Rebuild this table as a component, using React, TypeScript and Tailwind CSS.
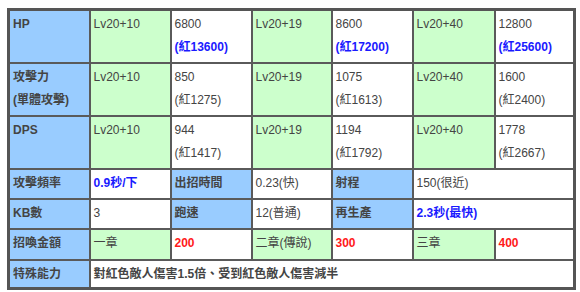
const B = "border-2 border-[#5a5a5a] align-top pt-[2px] pl-[3px] pr-[2px]";
const blue = `${B} bg-[#99ccff] font-bold`;
const green = `${B} bg-[#ccffcc]`;
const white = `${B} bg-white`;

const blueTxt = "text-[#1a1aff] font-bold";
const red = "text-[#ff1a1a] font-bold";

type Stat = { lv: string; base: string; red: string };

function StatRow({
  label,
  stats,
  hiBlue,
}: {
  label: React.ReactNode;
  stats: Stat[];
  hiBlue?: boolean;
}) {
  return (
    <tr className="h-[53px]">
      <td className={blue}>{label}</td>
      {stats.map((s) => (
        <>
          <td key={s.lv} className={green}>
            {s.lv}
          </td>
          <td key={s.lv + "v"} className={white}>
            <div>{s.base}</div>
            <div className={hiBlue ? blueTxt : ""}>(紅{s.red})</div>
          </td>
        </>
      ))}
    </tr>
  );
}

export default function App() {
  return (
    <div className="h-[292px] w-[580px] bg-white pt-[8px] pl-[7px]">
      <table
        className="table-fixed border-collapse border-[3px] border-[#555] text-[12px] leading-[23px] text-[#444]"
        style={{ fontFamily: '"Liberation Sans", Arial, "Noto Sans CJK TC", sans-serif' }}
      >
        <colgroup>
          <col className="w-[81px]" />
          <col className="w-[81px]" />
          <col className="w-[81px]" />
          <col className="w-[80px]" />
          <col className="w-[81px]" />
          <col className="w-[82px]" />
          <col className="w-[80px]" />
        </colgroup>
        <tbody>
          <StatRow
            label="HP"
            hiBlue
            stats={[
              { lv: "Lv20+10", base: "6800", red: "13600" },
              { lv: "Lv20+19", base: "8600", red: "17200" },
              { lv: "Lv20+40", base: "12800", red: "25600" },
            ]}
          />
          <StatRow
            label={
              <>
                <div>攻擊力</div>
                <div>(單體攻擊)</div>
              </>
            }
            stats={[
              { lv: "Lv20+10", base: "850", red: "1275" },
              { lv: "Lv20+19", base: "1075", red: "1613" },
              { lv: "Lv20+40", base: "1600", red: "2400" },
            ]}
          />
          <StatRow
            label="DPS"
            stats={[
              { lv: "Lv20+10", base: "944", red: "1417" },
              { lv: "Lv20+19", base: "1194", red: "1792" },
              { lv: "Lv20+40", base: "1778", red: "2667" },
            ]}
          />
          <tr className="h-[30px]">
            <td className={blue}>攻擊頻率</td>
            <td className={white}>
              <span className={blueTxt}>0.9秒/下</span>
            </td>
            <td className={blue}>出招時間</td>
            <td className={white}>0.23(快)</td>
            <td className={blue}>射程</td>
            <td className={white} colSpan={2}>
              150(很近)
            </td>
          </tr>
          <tr className="h-[30px]">
            <td className={blue}>KB數</td>
            <td className={white}>3</td>
            <td className={blue}>跑速</td>
            <td className={white}>12(普通)</td>
            <td className={blue}>再生產</td>
            <td className={white} colSpan={2}>
              <span className={blueTxt}>2.3秒(最快)</span>
            </td>
          </tr>
          <tr className="h-[31px]">
            <td className={blue}>招喚金額</td>
            <td className={green}>一章</td>
            <td className={white}>
              <span className={red}>200</span>
            </td>
            <td className={green}>二章(傳說)</td>
            <td className={white}>
              <span className={red}>300</span>
            </td>
            <td className={green}>三章</td>
            <td className={white}>
              <span className={red}>400</span>
            </td>
          </tr>
          <tr className="h-[29px]">
            <td className={blue}>特殊能力</td>
            <td className={`${white} font-bold`} colSpan={6}>
              對紅色敵人傷害1.5倍、受到紅色敵人傷害減半
            </td>
          </tr>
        </tbody>
      </table>
    </div>
  );
}
